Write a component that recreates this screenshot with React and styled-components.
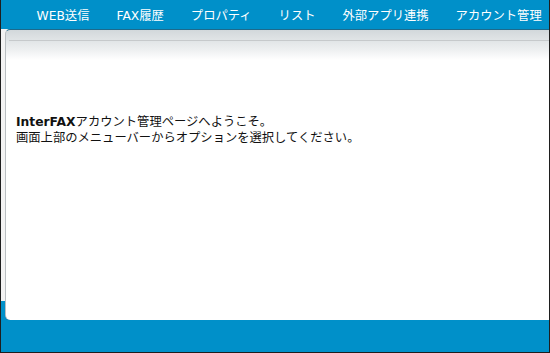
import React from "react";
import styled, { createGlobalStyle } from "styled-components";

const GlobalStyle = createGlobalStyle`
  html, body {
    margin: 0;
    padding: 0;
    background: #fff;
  }
  body {
    font-family: "DejaVu Sans", "Noto Sans CJK JP", sans-serif;
  }
`;

const Frame = styled.div`
  width: 550px;
  height: 353px;
  box-sizing: border-box;
  border: 1px solid #1e1e1e;
  border-top: none;
  display: flex;
  flex-direction: column;
  overflow: hidden;
`;

const Header = styled.div`
  height: 29px;
  box-sizing: border-box;
  padding: 3px 0 0 22px;
  flex-shrink: 0;
  background: #0090c9;
  display: flex;
  align-items: center;
`;

const NavItem = styled.a`
  color: #fff;
  font-size: 12.3px;
  padding: 0 13.5px;
  line-height: 26px;
  white-space: nowrap;
  text-decoration: none;
`;

const Body = styled.div`
  flex: 1;
  display: flex;
  flex-direction: column;
  background: linear-gradient(to bottom, #f3f3f3 0, #f3f3f3 272px, #0090c9 272px);
`;

const Panel = styled.div`
  margin-left: 4px;
  height: 291px;
  box-sizing: border-box;
  background: linear-gradient(to bottom, #d2d8db 0, #eef0f1 20px, #fff 30px);
  border-top: 1px solid #1d6a8c;
  border-left: 1px solid #b9bec1;
  border-radius: 5px 0 0 5px;
  box-shadow: 0 1px 0 #0a7ab0;
  display: flex;
  flex-direction: column;
`;

const PanelHead = styled.div`
  height: 10px;
  margin-left: 3px;
  border-bottom: 1px solid #c6c9cb;
`;

const Content = styled.div`
  padding: 73px 0 0 10px;
  font-size: 12.3px;
  line-height: 16px;
  color: #111;
`;

const Line = styled.p`
  margin: 0;
  white-space: nowrap;
`;

const Footer = styled.div`
  flex: 1;
  background: #0090c9;
`;

const menu = ["WEB送信", "FAX履歴", "プロパティ", "リスト", "外部アプリ連携", "アカウント管理"];

export default function App() {
  return (
    <>
      <GlobalStyle />
      <Frame>
        <Header>
          {menu.map((m) => (
            <NavItem key={m}>{m}</NavItem>
          ))}
        </Header>
        <Body>
          <Panel>
            <PanelHead />
            <Content>
              <Line>
                <b>InterFAX</b>アカウント管理ページへようこそ。
              </Line>
              <Line>画面上部のメニューバーからオプションを選択してください。</Line>
            </Content>
          </Panel>
          <Footer />
        </Body>
      </Frame>
    </>
  );
}
